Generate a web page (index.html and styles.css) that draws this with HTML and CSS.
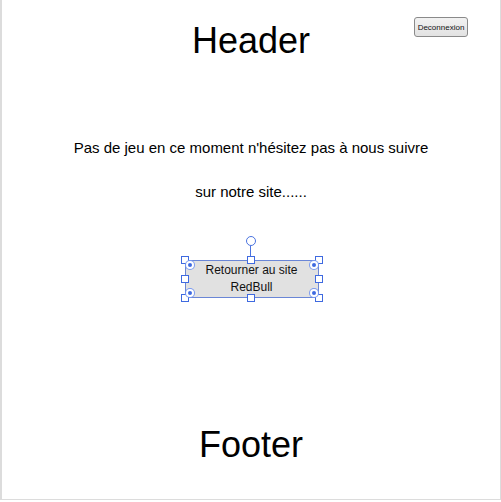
FILE: index.html
```html
<!DOCTYPE html>
<html lang="fr">
<head>
<meta charset="UTF-8">
<meta name="viewport" content="width=device-width, initial-scale=1.0">
<title>Pas de jeu</title>
<link rel="stylesheet" href="styles.css">
</head>
<body>

<div class="frame">
    <div class="top">
        <div></div>
        <h1 class="title">Header</h1>
        <div class="logout-cell">
            <button class="logout">Deconnexion</button>
        </div>
    </div>

    <p class="message">Pas de jeu en ce moment n'hésitez pas à nous suivre<br>sur notre site......</p>

    <div class="button-row">
        <div class="selected">
            <button class="back">Retourner au site RedBull</button>
            <span class="rotate"></span>
            <span class="handle h-tl"></span>
            <span class="handle h-tc"></span>
            <span class="handle h-tr"></span>
            <span class="handle h-ml"></span>
            <span class="handle h-mr"></span>
            <span class="handle h-bl"></span>
            <span class="handle h-bc"></span>
            <span class="handle h-br"></span>
            <span class="dot d-tl"></span>
            <span class="dot d-tr"></span>
            <span class="dot d-bl"></span>
            <span class="dot d-br"></span>
        </div>
    </div>

    <h1 class="title footer">Footer</h1>
</div>

</body>
</html>
```

FILE: styles.css
```css
body {
    margin: 0;
    padding: 0;
    background: #fff;
    color: #000;
    font-family: "Liberation Sans", Arial, sans-serif;
}

.frame {
    width: 501px;
    height: 500px;
    box-sizing: border-box;
    border: 1px solid #dcdcdc;
    border-top: none;
    border-left-width: 2px;
}

.top {
    display: grid;
    grid-template-columns: 1fr auto 1fr;
    padding-top: 17px;
}

.title {
    margin: 3px 0 0 0;
    font-size: 36px;
    font-weight: normal;
    line-height: 42px;
    text-align: center;
}

.logout-cell {
    display: flex;
    justify-content: flex-end;
    align-items: flex-start;
    padding-right: 32px;
}

.logout {
    width: 54px;
    height: 20px;
    padding: 0;
    font-family: "Liberation Sans", Arial, sans-serif;
    font-size: 8px;
    color: #111;
    background: linear-gradient(#f2f2f2, #e2e2e2);
    border: 1px solid #8a8a8a;
    border-radius: 3px;
}

.message {
    margin: 64px 0 0 0;
    font-size: 15px;
    line-height: 44px;
    text-align: center;
}

.button-row {
    display: flex;
    justify-content: center;
    margin-top: 46px;
    padding-left: 1px;
}

.selected {
    position: relative;
}

.back {
    display: block;
    width: 134px;
    height: 38px;
    padding: 0 18px;
    font-family: "Liberation Sans", Arial, sans-serif;
    font-size: 12px;
    line-height: 17px;
    color: #111;
    background: #e1e1e1;
    border: 1px solid #6a86d6;
    border-radius: 0;
}

.rotate {
    position: absolute;
    left: 61px;
    top: -24px;
    width: 8px;
    height: 8px;
    border: 1px solid #4a73e0;
    border-radius: 50%;
    background: #fff;
}

.rotate::after {
    content: "";
    position: absolute;
    left: 3px;
    top: 9px;
    width: 1px;
    height: 12px;
    background: #4a73e0;
}

.handle {
    position: absolute;
    width: 6px;
    height: 6px;
    border: 1px solid #3f6ae0;
    background: #fff;
}

.h-tl { left: -4px; top: -4px; }
.h-tc { left: 62px; top: -4px; }
.h-tr { right: -4px; top: -4px; }
.h-ml { left: -4px; top: 15px; }
.h-mr { right: -4px; top: 15px; }
.h-bl { left: -4px; bottom: -4px; }
.h-bc { left: 62px; bottom: -4px; }
.h-br { right: -4px; bottom: -4px; }

.dot {
    position: absolute;
    width: 4px;
    height: 4px;
    border-radius: 50%;
    background: #3f6ae0;
    border: 2px solid #fff;
    box-shadow: 0 0 0 1px #7a9af0;
}

.d-tl { left: 1px; top: 1px; }
.d-tr { right: 1px; top: 1px; }
.d-bl { left: 1px; bottom: 1px; }
.d-br { right: 1px; bottom: 1px; }

.footer {
    margin-top: 126px;
}
```
